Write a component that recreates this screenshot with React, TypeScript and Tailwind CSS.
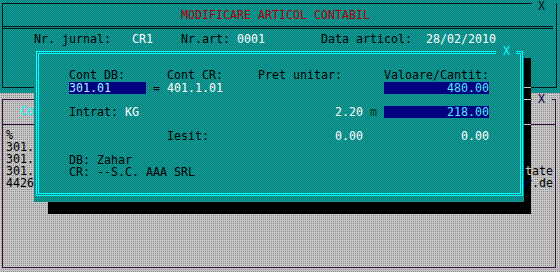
const teal =
  "bg-[image:repeating-conic-gradient(#00807c_0%_25%,#1b9d98_0%_50%)] bg-[length:2px_2px]";
const grey =
  "bg-[image:conic-gradient(#8e8e8e_0%_25%,#c6c6c6_0%)] bg-[length:2px_2px]";

const W = ({ children }: { children: React.ReactNode }) => (
  <span className="text-white">{children}</span>
);

const Field = ({ children, w }: { children: React.ReactNode; w: string }) => (
  <span className={`${w} h-3 bg-[#000080] text-[#55e6ff] text-right`}>{children}</span>
);

const TopWindow = () => (
  <div className={`absolute left-0 top-0 w-[560px] h-[93px] ${teal}`}>
    <div className="ml-[2px] mt-[3px] w-[555px] h-[85px] border-x border-b border-[#001414]">
      <div className="-ml-px h-px w-[530px] bg-[#001414]" />
      <div className="mt-[5px] pl-[178px] h-3 text-[#a80000]">MODIFICARE ARTICOL CONTABIL</div>
      <div className="-ml-px mt-[5px] h-[3px] w-[551px] border-y border-[#001414]" />
      <div className="mt-[4px] pl-[31px] h-3">
        {"Nr. jurnal:   "}
        <W>CR1</W>
        {"    Nr.art: "}
        <W>0001</W>
        {"        Data articol:  "}
        <W>28/02/2010</W>
      </div>
    </div>
    <span className="absolute left-[538px] top-0 text-[#001414]">X</span>
  </div>
);

// first char of the right-hand texts sits over the dialog's shadow
const greyRows: [string, string, string, string][] = [
  ["%", "", "", ""],
  ["301.", "", "", ""],
  ["301.", "", "", ""],
  ["301.", "t", "ate", "text-[#c6c6c6]"],
  ["4426", "r", ".de", "text-[#000050]"],
];

const GreyWindow = () => (
  <div className={`absolute left-0 top-[93px] w-[560px] h-[179px] ${grey}`}>
    <div className="ml-[2px] mt-[6px] w-[554px] h-[169px] border-x border-b border-[#3a103a]">
      <div className="flex h-px">
        <div className="-ml-px w-[530px] bg-[#3a103a]" />
        <div className="ml-[20px] w-[3px] bg-[#3a103a]" />
      </div>
      <div className="mt-[5px] pl-[17px] h-3 text-[#00ffff]">Co</div>
      <div className="-ml-px mt-[7px] h-px w-[554px] bg-[#3a103a]" />
      <div className="mt-[4px]">
        {greyRows.map(([l, first, rest, c], i) => (
          <div key={i} className="flex justify-between h-3 pl-[3px] pr-[2px]">
            <span>{l}</span>
            <span className="relative z-10">
              <span className={c}>{first}</span>
              {rest}
            </span>
          </div>
        ))}
      </div>
    </div>
    <span className="absolute left-[538px] top-0 text-[#000040]">X</span>
  </div>
);

const Shadow = () => (
  <>
    <div className="absolute left-[48px] top-[58px] w-[483px] h-[156px] bg-black" />
    <div className="absolute left-[524px] top-[87px] w-[7px] h-px bg-[#c6c6c6]" />
    <div className="absolute left-[524px] top-[99px] w-[7px] h-px bg-[#c6c6c6]" />
    <div className="absolute left-[524px] top-[124px] w-[7px] h-px bg-[#c6c6c6]" />
  </>
);

const Dialog = () => (
  <div className={`absolute z-20 left-[34px] top-[49px] w-[490px] h-[153px] ${teal}`}>
    <div className="absolute left-[2px] top-[2px] w-[487px] h-[145px] border border-[#00ffff]">
      <div className="absolute inset-px border border-[#00ffff]" />
    </div>
    <div className={`absolute left-[462px] top-0 w-[20px] h-[6px] ${teal}`} />
    <span className="absolute left-[469px] top-[-4px] text-[#00ffff]">X</span>

    <div className="relative pt-[20px] pl-[35px]">
      <div className="h-3">{"Cont DB:      Cont CR:     Pret unitar:      Valoare/Cantit:"}</div>
      <div className="mt-px flex h-3">
        <span className="w-[77px] h-3 bg-[#000080] text-[#9ff5ff]">301.01</span>
        <span>{" = "}</span>
        <W>401.1.01</W>
        <span>{" ".repeat(23)}</span>
        <Field w="w-[105px]">480.00</Field>
      </div>
      <div className="h-3" />
      <div className="flex h-3">
        <span>{"Intrat: "}</span>
        <W>KG</W>
        <span>{" ".repeat(28)}</span>
        <W>2.20</W>
        <span className="text-[#003a10]">{" m "}</span>
        <Field w="w-[105px]">218.00</Field>
      </div>
      <div className="h-3" />
      <div className="flex h-3">
        <span>{" ".repeat(14) + "Iesit:" + " ".repeat(18)}</span>
        <W>0.00</W>
        <span>{" ".repeat(14)}</span>
        <W>0.00</W>
      </div>
      <div className="h-3" />
      <div className="h-3">DB: Zahar</div>
      <div className="h-3">CR: --S.C. AAA SRL</div>
    </div>
  </div>
);

export default function App() {
  return (
    <div className="relative w-[560px] h-[272px] overflow-hidden bg-[#c6c6c6] font-['DejaVu_Sans_Mono',monospace] text-[11.63px] leading-3 whitespace-pre text-black">
      <TopWindow />
      <GreyWindow />
      <Shadow />
      <Dialog />
    </div>
  );
}
